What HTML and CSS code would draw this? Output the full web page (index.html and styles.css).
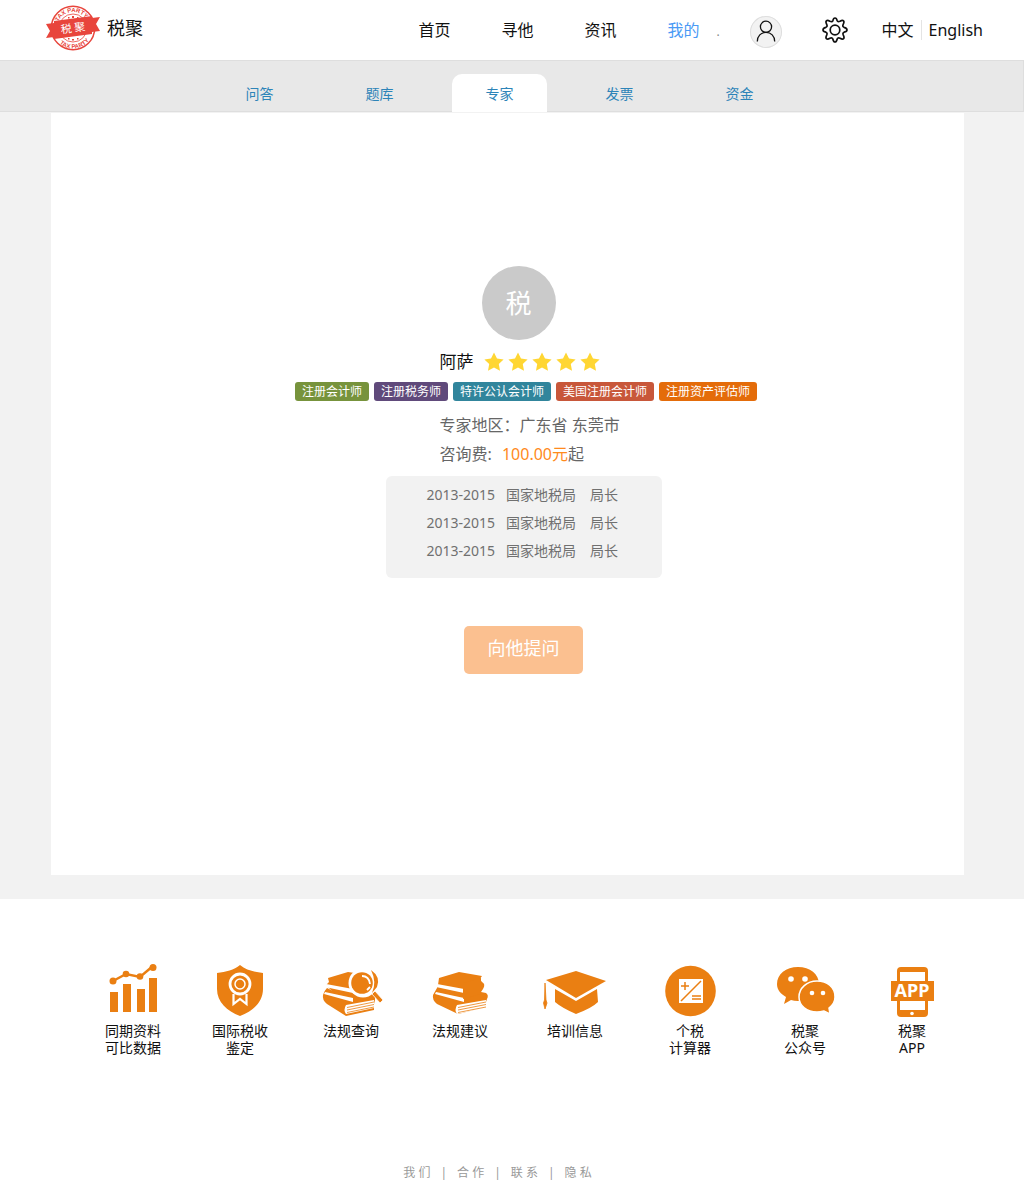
FILE: index.html
```html
<!DOCTYPE html>
<html lang="zh-CN">
<head>
<meta charset="utf-8">
<meta name="viewport" content="width=device-width, initial-scale=1">
<title>税聚 - 专家</title>
<link rel="stylesheet" href="styles.css">
</head>
<body>
<header class="header">
  <a class="brand" href="#">
    <svg class="brand-seal" viewBox="0 0 54 46" aria-hidden="true">
      <defs>
        <path id="arc-top" d="M11 23a16 16 0 0 1 32 0"/>
        <path id="arc-bottom" d="M6.500 23a20.500 20.500 0 0 0 41 0"/>
      </defs>
      <circle cx="27" cy="23" r="21.700" fill="#fff" stroke="#e8453c" stroke-width="1.500"/>
      <circle cx="27" cy="23" r="14" fill="none" stroke="#e8453c" stroke-width=".8"/>
      <text class="seal-ring"><textPath href="#arc-top" startOffset="46%">TAX PARTY</textPath></text>
      <text class="seal-ring"><textPath href="#arc-bottom" startOffset="53%">TAX PARTY</textPath></text>
      <path fill="#e8453c" d="M22 12h1.500v1.500H22zM26 11h2v2h-2zM31 12h1.500v1.500H31zM22 33h1.500v1.500H22zM26 34h2v1.500h-2zM31 33h1.500v1.500H31z"/>
      <path fill="#e8453c" d="M0 19l8-1v-2l38-5v2l8-1-4 7 4 7-8 1v2L8 34v-2l-8 1 4-7z"/>
      <text class="seal-name" x="27" y="27" transform="rotate(-7 27 23)">税 聚</text>
    </svg>
    <span class="brand-name">税聚</span>
  </a>
  <nav class="main-nav" aria-label="主导航">
    <a href="#">首页</a>
    <a href="#">寻他</a>
    <a href="#">资讯</a>
    <a class="is-current" href="#">我的</a>
  </nav>
  <span class="nav-dot">.</span>
  <a class="user" href="#" aria-label="用户">
    <svg viewBox="0 0 32 32" fill="none" stroke="#111" stroke-width="1.300"><circle cx="16" cy="10.800" r="5.600"/><path d="M7.300 25.500c0-5.500 3.700-9.100 8.700-9.100s8.700 3.600 8.700 9.100"/></svg>
  </a>
  <a class="settings" href="#" aria-label="设置">
    <svg viewBox="0 0 26 26" fill="none" stroke="#111" stroke-width="1.700" stroke-linejoin="round"><circle cx="13" cy="13" r="4.800"/><path d="M10.800 3.800C11.300 1.600 11.800 1 13 1s1.700.6 2.200 2.800q.4 1.200 2.800.5c1.900-1.100 2.700-1.200 3.500-.4s.7 1.600-.3 3.500q-1 2 .8 2.900c2.400.5 3 1.500 3 2.700s-.6 1.700-2.900 2.200q-1.800.8-.8 2.900c1 1.900 1.100 2.700.3 3.500s-1.600.7-3.500-.4q-2.400-.8-2.900.8c-.5 2.200-1 3-2.200 3s-1.700-.8-2.200-3q-.5-1.600-2.900-.8c-1.900 1.100-2.700 1.200-3.500.4s-.7-1.600.3-3.500q1-2.100-.8-2.900C1.600 14.700 1 14.200 1 13s.6-2.200 2.900-2.700q1.800-.9.800-2.900c-1-1.900-1.100-2.700-.3-3.500s1.600-.7 3.500.4q2.400.7 2.900-.5z"/></svg>
  </a>
  <div class="languages">
    <a href="#">中文</a>
    <a href="#" lang="en">English</a>
  </div>
</header>

<nav class="tabs" aria-label="我的">
  <a href="#">问答</a>
  <a href="#">题库</a>
  <a class="is-active" href="#">专家</a>
  <a href="#">发票</a>
  <a href="#">资金</a>
</nav>

<main class="main">
  <section class="panel">
    <div class="avatar">税</div>
    <div class="intro">
      <div class="name-row">
        <h1 class="name">阿萨</h1>
        <div class="stars" role="img" aria-label="五星">
          <svg viewBox="0 0 20 20"><path d="M10 .5l3 6 6.600 1-4.800 4.600 1.200 6.700-6-3.200-6 3.200 1.200-6.700L.4 7.500l6.600-1z"/></svg>
          <svg viewBox="0 0 20 20"><path d="M10 .5l3 6 6.600 1-4.800 4.600 1.200 6.700-6-3.200-6 3.200 1.200-6.700L.4 7.500l6.600-1z"/></svg>
          <svg viewBox="0 0 20 20"><path d="M10 .5l3 6 6.600 1-4.800 4.600 1.200 6.700-6-3.200-6 3.200 1.200-6.700L.4 7.500l6.600-1z"/></svg>
          <svg viewBox="0 0 20 20"><path d="M10 .5l3 6 6.600 1-4.800 4.600 1.200 6.700-6-3.200-6 3.200 1.200-6.700L.4 7.500l6.600-1z"/></svg>
          <svg viewBox="0 0 20 20"><path d="M10 .5l3 6 6.600 1-4.800 4.600 1.200 6.700-6-3.200-6 3.200 1.200-6.700L.4 7.500l6.600-1z"/></svg>
        </div>
      </div>
    </div>
    <ul class="tags">
      <li class="tag tag-green">注册会计师</li>
      <li class="tag tag-purple">注册税务师</li>
      <li class="tag tag-teal">特许公认会计师</li>
      <li class="tag tag-red">美国注册会计师</li>
      <li class="tag tag-orange">注册资产评估师</li>
    </ul>
    <div class="intro details">
      <p>专家地区：广东省 东莞市</p>
      <p>咨询费: <span class="price">100.00元</span>起</p>
    </div>
    <ul class="history">
      <li><span>2013-2015</span><span class="office">国家地税局</span><span>局长</span></li>
      <li><span>2013-2015</span><span class="office">国家地税局</span><span>局长</span></li>
      <li><span>2013-2015</span><span class="office">国家地税局</span><span>局长</span></li>
    </ul>
    <button class="ask" type="button">向他提问</button>
  </section>
</main>

<footer class="footer">
  <nav class="services" aria-label="服务">
    <a href="#">
      <svg width="50" height="54" viewBox="0 0 50 54"><path d="M2 29h8v20H2zM15 21h8v28h-8zM29 26h8v23h-8zM41 15h8v34h-8z"/><path d="M5 18l13-7 14 3L45 3" fill="none" stroke="#ea7f12" stroke-width="2.500"/><circle cx="5" cy="18" r="3.500"/><circle cx="18" cy="11" r="3.300"/><circle cx="32" cy="13.500" r="3.300"/><circle cx="45" cy="4.500" r="3.500"/></svg>
      <span>同期资料<br>可比数据</span>
    </a>
    <a href="#">
      <svg width="46" height="54" viewBox="0 0 46 54"><path d="M23 2c6 5 14 7 23 8v16c0 13-10 22-23 27C10 48 0 39 0 26V10c9-1 17-3 23-8z"/><g fill="none" stroke="#fff"><circle cx="23" cy="21" r="10" stroke-width="2.800"/><circle cx="23" cy="21" r="5" stroke-width="1.500"/><path d="M16.500 31v10l6.500-5 6.500 5V31" stroke-width="2.200"/></g><circle cx="23" cy="21" r="2.500"/></svg>
      <span>国际税收<br>鉴定</span>
    </a>
    <a href="#">
      <svg width="58" height="54" viewBox="0 0 58 54"><path d="M6 15l20-6 20 3v25l-22 5L4 22l3-3z"/><path d="M1 32q1-4 4-7l22 11 26-6v7l-1 4v6l-28 6L5 41q-5-4-4-9z"/><path d="M4 21l27 5v4L3 24zM3 29l28 6v4L2 31z" fill="#fff"/><path d="M24 42l28-5v8l-28 6q-3-4 0-9z" fill="#fff"/><path d="M25 44.500l27-5.500M25 47l27-5.500M25 49.500l27-5.500" stroke="#ea7f12" stroke-width=".8"/><circle cx="41" cy="20" r="14.500" fill="#fff"/><path d="M49 7q10 7 6 17l-5 6q5-11-1-23z"/><circle cx="40" cy="20" r="10.800"/><path d="M40 13q7 0 8 8M48 24l-3 3" fill="none" stroke="#fff" stroke-width="1.800"/><path d="M50 31l3-3 8 9-3 3z" stroke="#fff" stroke-width=".8"/></svg>
      <span>法规查询</span>
    </a>
    <a href="#">
      <svg width="55" height="54" viewBox="0 0 55 54"><path d="M6 15l20-6 23 4q-3 3 0 6 4 2 1 7l-2 3 5 1q3 2 1 6l-1 3v5l-28 7L4 41q-5-4-4-9l4-7 1-3z"/><path d="M4 21l27 5v4L3 24zM3 29l28 6v4L2 31z" fill="#fff"/><path d="M30 20l18-5v16l-18 5z"/><path d="M24 42l29-5v8l-29 6q-3-4 0-9z" fill="#fff"/><path d="M25 44.500l28-5.500M25 47l28-5.500M25 49.500l28-5.500" stroke="#ea7f12" stroke-width=".8"/></svg>
      <span>法规建议</span>
    </a>
    <a href="#">
      <svg width="60" height="54" viewBox="0 0 60 54"><path d="M1 17l30-9 30 10-30 17z"/><path d="M10 26l21 12 21-12 1 13q-6 6-22 12-14-6-21-12z"/><path d="M0 20l1 17 1 3-2 6-1.500-6 1-3z" stroke="#ea7f12" stroke-width=".8"/></svg>
      <span>培训信息</span>
    </a>
    <a href="#">
      <svg width="50" height="54" viewBox="0 0 50 54"><circle cx="25.500" cy="28" r="25.300"/><path d="M14 16h24v24H14z" fill="#fff"/><path d="M16 38l20-20M16 23h8M20 19v8M27 33h9M27 36h9" fill="none" stroke="#ea7f12" stroke-width="1.500"/></svg>
      <span>个税<br>计算器</span>
    </a>
    <a href="#">
      <svg width="56" height="54" viewBox="0 0 56 54"><path d="M21 4c12 0 21 7 21 17S33 38 21 38q-4 0-7-1l-7 4 2-7C4 31 0 27 0 21 0 11 9 4 21 4z"/><path d="M40 18c10 0 18 6 18 16 0 4-2 8-6 11l1 6-6-3q-4 1-7 1c-10 0-18-6-18-15s8-16 18-16z" stroke="#fff" stroke-width="1.500"/><g fill="#fff"><circle cx="14" cy="16" r="2.800"/><circle cx="28" cy="16" r="2.800"/><circle cx="35" cy="30" r="2.300"/><circle cx="46" cy="30" r="2.300"/></g></svg>
      <span>税聚<br>公众号</span>
    </a>
    <a href="#">
      <svg width="44" height="54" viewBox="0 0 44 54"><rect x="7" y="4" width="31" height="50" rx="4"/><path d="M10 9h25v38H10z" fill="#fff"/><path d="M1 18h43v20H1z"/><circle cx="22" cy="50.500" r="1.800" fill="#fff"/><text class="app-mark" x="22" y="34">APP</text></svg>
      <span>税聚<br>APP</span>
    </a>
  </nav>
  <nav class="links" aria-label="页脚">
    <a href="#">我 们</a>
    <a href="#">合 作</a>
    <a href="#">联 系</a>
    <a href="#">隐 私</a>
  </nav>
</footer>
</body>
</html>
```
FILE: styles.css
```css
* {
  box-sizing: border-box;
}

body {
  margin: 0;
  background: #fff;
  color: #111;
  font: 16px/24px "Noto Sans", "Noto Sans CJK SC", sans-serif;
}

a {
  color: inherit;
  text-decoration: none;
}

ul,
p,
h1 {
  margin: 0;
  padding: 0;
  list-style: none;
}

svg {
  display: block;
}

/* Header */
.header {
  display: flex;
  align-items: center;
  height: 60px;
  padding: 0 41px 0 46px;
}

.brand {
  display: flex;
  align-items: center;
  gap: 7px;
  margin-right: auto;
  padding-bottom: 4px;
}

.brand-seal {
  width: 54px;
  height: 46px;
}

.seal-ring {
  fill: #e8453c;
  font: bold 6px "Liberation Sans", sans-serif;
  text-anchor: middle;
}

.seal-name {
  fill: #fff;
  font: 11px "Noto Sans CJK SC", sans-serif;
  text-anchor: middle;
}

.brand-name {
  font-size: 18px;
}

.main-nav {
  display: flex;
  gap: 51px;
}

.main-nav .is-current {
  color: #4a9af5;
}

.nav-dot {
  width: 50px;
  padding: 4px 0 0 17px;
  color: #888;
  font-size: 12px;
}

.user {
  width: 32px;
  height: 32px;
  margin-top: 4px;
  border-radius: 50%;
  background: #f2f2f2;
  box-shadow: inset 0 0 0 1px #dedede;
}

.settings {
  width: 26px;
  margin: 0 34px 0 40px;
}

.languages {
  display: flex;
  align-items: center;
}

.languages a + a {
  margin-left: 7px;
  padding-left: 7px;
  border-left: 1px solid #e4e4e4;
  line-height: 20px;
}

/* Section tabs */
.tabs {
  display: flex;
  justify-content: center;
  align-items: flex-end;
  gap: 25px;
  height: 52px;
  padding-right: 24px;
  border: 1px solid #dedede;
  border-width: 1px 1px 1px 0;
  background: #e8e8e8;
  color: #2d84b8;
  font-size: 14px;
}

.tabs a {
  width: 95px;
  height: 38px;
  margin-bottom: -1px;
  border-radius: 10px 10px 0 0;
  line-height: 40px;
  text-align: center;
}

.tabs .is-active {
  background: #fff;
}

/* Expert profile */
.main {
  padding: 1px 60px 24px 51px;
  background: #f2f2f2;
}

.panel {
  display: flex;
  flex-direction: column;
  align-items: center;
  min-height: 762px;
  padding: 153px 0 32px 32px;
  background: #fff;
}

.avatar {
  width: 74px;
  height: 74px;
  margin-right: 10px;
  border-radius: 50%;
  background: #cacaca;
  color: #fff;
  font-size: 26px;
  line-height: 74px;
  text-align: center;
}

.intro {
  width: 276px;
  padding-left: 54px;
}

.name-row {
  display: flex;
  align-items: center;
  gap: 10px;
  height: 42px;
  padding-top: 2px;
}

.name {
  font-size: 17px;
  font-weight: 400;
}

.stars {
  display: flex;
  gap: 4px;
}

.stars svg {
  width: 20px;
  height: 20px;
  fill: #ffd633;
}

.tags {
  display: flex;
  justify-content: center;
  gap: 5px;
  padding-left: 5px;
}

.tag {
  padding: 0 7px;
  border-radius: 3px;
  color: #fff;
  font-size: 12px;
  line-height: 19px;
  white-space: nowrap;
}

.tag-green { background: #77933c; }
.tag-purple { background: #604a7b; }
.tag-teal { background: #31859c; }
.tag-red { background: #c8573a; }
.tag-orange { background: #e46c0a; }

.details {
  margin: 10px 0 7px;
  color: #666;
  font-size: 16px;
  line-height: 29px;
  white-space: nowrap;
}

.price {
  margin-left: 6px;
  color: #ff8a1c;
}

.history {
  width: 276px;
  padding: 5px 0 13px 41px;
  border-radius: 6px;
  background: #f2f2f2;
  color: #707070;
  font-size: 14px;
  line-height: 28px;
}

.history li {
  display: flex;
}

.office {
  margin: 0 14px 0 11px;
}

.ask {
  width: 119px;
  height: 48px;
  margin-top: 48px;
  padding: 0 0 4px;
  border: 0;
  border-radius: 5px;
  background: #fbc090;
  color: #fff;
  font: inherit;
  font-size: 18px;
}

/* Footer */
.services {
  display: grid;
  grid-template-columns: 102fr 112fr 110fr 108fr 122fr 108fr 122fr 92fr;
  padding: 64px 66px 0 82px;
  font-size: 14px;
  line-height: 17px;
  text-align: center;
}

.services a {
  display: flex;
  flex-direction: column;
  align-items: center;
  gap: 5px;
}

.services svg {
  fill: #ea7f12;
  overflow: visible;
}

.app-mark {
  fill: #fff;
  font: bold 18px "Noto Sans", sans-serif;
  text-anchor: middle;
}

.links {
  display: flex;
  justify-content: center;
  padding: 107px 29px 17px 0;
  color: #999;
  font-size: 12px;
  line-height: 20px;
}

.links a + a::before {
  content: "|";
  margin: 0 10px;
}
```
